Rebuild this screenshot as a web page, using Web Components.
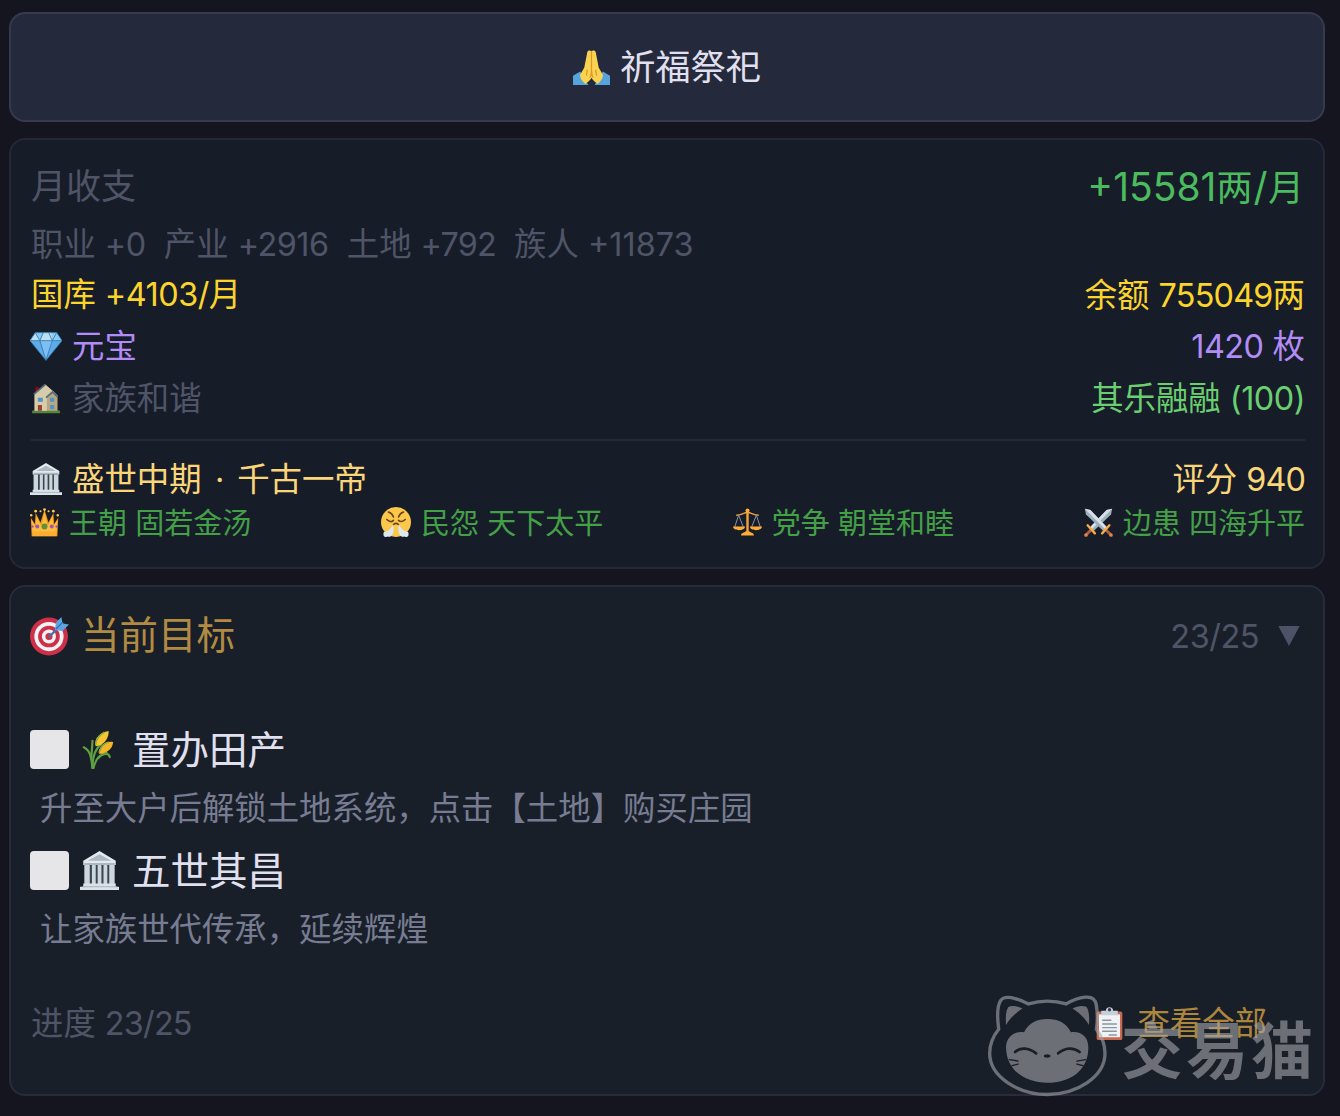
<!DOCTYPE html>
<html lang="zh-CN">
<head>
<meta charset="UTF-8">
<title>家族</title>
<style>
  html, body {
    height: 100%;
  }

  body {
    margin: 0;
    overflow: hidden;
    background: #14151e;
    color: #e0e0f0;
    font-family: "Noto Sans CJK SC", sans-serif;
    font-size: 32.4px;
    font-weight: 400;
    word-spacing: 1.8px;
  }
</style>
</head>
<body>
<family-page>
  <game-button><emoji-icon name="pray" size="37"></emoji-icon><span>祈福祭祀</span></game-button>

  <game-panel class="finance">
    <stat-row style="--h: 62px; --size: 35px; --color: #4f5467; --value: #4bbb5e; --value-size: 36px; --end: 1px; --lift: 8px; --value-lift: 2px">
      月收支
      <span slot="value"><num-run style="--num: 39px; --track: 0px">+15581</num-run>两<num-run style="--num: 39px; --gap: 1px">/</num-run>月</span>
    </stat-row>
    <stat-row style="--h: 52px; --color: #4f5467; --lift: 1px">
      职业 <num-run>+0</num-run>&nbsp; 产业 <num-run>+2916</num-run>&nbsp; 土地 <num-run style="--track: -0.8px">+792</num-run>&nbsp; 族人 <num-run style="--track: 0px">+11873</num-run>
    </stat-row>
    <stat-row style="--h: 50px; --color: #fbd42c">
      国库 <num-run>+4103/</num-run>月
      <span slot="value">余额 <num-run style="--track: -0.8px">755049</num-run>两</span>
    </stat-row>
    <stat-row style="--h: 52px; --color: #b28cf6">
      <emoji-icon slot="icon" name="gem" size="32"></emoji-icon>元宝
      <span slot="value"><num-run>1420</num-run> 枚</span>
    </stat-row>
    <stat-row style="--h: 52px; --color: #4f5467; --value: #69cf70">
      <emoji-icon slot="icon" name="house" size="32"></emoji-icon>家族和谐
      <span slot="value">其乐融融 <num-run>(100)</num-run></span>
    </stat-row>
    <panel-divider></panel-divider>
    <stat-row style="--h: 46px; --color: #fad679; --lift: 1px">
      <emoji-icon slot="icon" name="temple" size="32"></emoji-icon>盛世中期<num-run style="--gap: 3px"> · </num-run>千古一帝
      <span slot="value">评分 <num-run style="--track: -0.9px">940</num-run></span>
    </stat-row>
    <realm-status>
      <realm-item><emoji-icon name="crown" size="29"></emoji-icon><span>王朝 固若金汤</span></realm-item>
      <realm-item><emoji-icon name="huff" size="30"></emoji-icon><span>民怨 天下太平</span></realm-item>
      <realm-item><emoji-icon name="scales" size="29"></emoji-icon><span>党争 朝堂和睦</span></realm-item>
      <realm-item><emoji-icon name="swords" size="29"></emoji-icon><span>边患 四海升平</span></realm-item>
    </realm-status>
  </game-panel>

  <game-panel class="goals">
    <stat-row style="--h: 66px; --size: 38.5px; --color: #b18b43; --value: #4f5467; --value-size: 32.5px; --end: 4px; --icon-gap: 12px; --lift: 7px; --value-lift: 0px">
      <emoji-icon slot="icon" name="target" size="39"></emoji-icon>当前目标
      <span slot="value"><num-run>23/25</num-run><emoji-icon name="caret" size="24" style="margin-left: 18px; vertical-align: 0"></emoji-icon></span>
    </stat-row>
    <goal-list>
      <goal-item>
        <emoji-icon slot="icon" name="rice" size="39"></emoji-icon>
        置办田产
        <span slot="desc">升至大户后解锁土地系统，点击【土地】购买庄园</span>
      </goal-item>
      <goal-item>
        <emoji-icon slot="icon" name="temple" size="39"></emoji-icon>
        五世其昌
        <span slot="desc">让家族世代传承，延续辉煌</span>
      </goal-item>
    </goal-list>
    <stat-row style="--h: 60px; --color: #4f5467; --value: #ad863d; --end: 38px; --value-lift: 4px">
      进度 <num-run style="--track: -0.8px">23/25</num-run>
      <span slot="value"><emoji-icon name="clipboard" size="33" style="margin-right: 11px; vertical-align: -5px"></emoji-icon>查看全部</span>
    </stat-row>
  </game-panel>

  <cat-watermark slot="overlay">交易猫</cat-watermark>
</family-page>

<script>
const ICONS = {
  pray: `
    <path fill="#55a4dc" d="M0 26l7-4 8 13H0zM36 26l-7-4-8 13h15z"/>
    <path fill="#fcd350" d="M17.8 2c-1.3-1.2-3.6-.7-3.9 1.2L11 18l-4 7c-1 2 2.5 7 5 9 2.600-2 4.800-3.500 6-6 1.200 2.500 3.400 4 6 6 2.500-2 6-7 5-9l-4-7-2.900-14.800c-.3-1.900-2.600-2.400-4.300-1.200z"/>
    <path fill="none" stroke="#d89b2b" stroke-width="1.200" d="M18 2v17c0 4 0 6-1.500 9M18 19c0 4 0 6 1.500 9M14 20l-1 6M22 20l1 6"/>`,
  gem: `
    <path fill="#5dadec" d="M0 12L18 34 36 12 30 3H6z"/>
    <path fill="#8ccaf7" d="M0 12L6 3h24l6 9z"/>
    <path fill="#bddff4" d="M12 12L15 3h9l1 9zM0 12l6-9 5 9z"/>
    <path fill="#7dbff2" d="M12 12h13l-7 22z"/>
    <path fill="none" stroke="#3a7eb0" stroke-width="1" d="M0 12L6 3h24l6 9-18 22zM0 12h36M11 12l7 22 7-22M6 3l5 9 4-9M21 3l4 9 5-9"/>`,
  house: `
    <g transform="translate(1.500 2) scale(.92)" opacity=".9">
      <path fill="#5c913b" d="M1 33q17-5 34 0v3H1z"/>
      <path fill="#a0041e" d="M5 4h4v8H5z"/>
      <path fill="#c9b88d" d="M4 12L17 1l10 8 5 5v19H4z"/>
      <path fill="#ebdfb9" d="M17 1L4 12v21h15V17l8-7z"/>
      <path fill="none" stroke="#66757f" stroke-width="2.200" d="M18 17l8-7 6 6M3 13L17 1"/>
      <path fill="#55a1d5" d="M8 17h6v5H8zM23 17h5v5h-5zM23 26h5v5h-5z"/>
      <path fill="#a84232" d="M8 26h5v7H8z"/>
    </g>`,
  temple: `
    <path fill="#e3e9ed" d="M3 9L18 0l15 9v4H3z"/>
    <path fill="#aab8c2" d="M7 9l11-6 11 6zM4 11h28v2H4z"/>
    <path fill="#3c4650" d="M5 13h26v18H5z"/>
    <path fill="#ccd6dd" d="M4 13h5v18H4zM11 13h3.500v18H11zM16.300 13h3.500v18h-3.500zM21.700 13h3.500v18h-3.500zM27 13h5v18h-5z"/>
    <path fill="#dce3e8" d="M3 30h30v3H3zM0 33h36v3H0z"/>
    <path fill="#a5b2bb" d="M2 32.500h32v1H2z"/>`,
  crown: `
    <path fill="#f4900c" d="M2 35L1 12l5 8 1-14 6 12 5-16 5 16 6-12 1 14 5-8-1 23z"/>
    <path fill="#ffbd3f" d="M3 31L2 15l5 8 1-13 6 12 4-17 4 17 6-12 1 13 5-8-1 16z"/>
    <path fill="#ffac33" d="M3 29h30v6H3z"/>
    <g fill="#ffcc4d"><circle cx="1.500" cy="9" r="1.500"/><circle cx="7" cy="4" r="1.700"/><circle cx="13" cy="4" r="1.300"/><circle cx="18" cy="2" r="1.800"/><circle cx="23" cy="4" r="1.300"/><circle cx="29" cy="4" r="1.700"/><circle cx="34.500" cy="9" r="1.500"/></g>
    <circle cx="18" cy="23" r="3.700" fill="#5c913b"/>
    <g fill="#9b55b5"><circle cx="9" cy="23" r="2.500"/><circle cx="27" cy="23" r="2.500"/><circle cx="3" cy="23" r="1.500"/><circle cx="33" cy="23" r="1.500"/></g>`,
  huff: `
    <circle cx="18" cy="18" r="18" fill="#fbc84b"/>
    <path fill="none" stroke="#704516" stroke-width="2" stroke-linecap="round" d="M9 6c3 1 5 3 6 6M27 6c-3 1-5 3-6 6M7 15c3 3 6 3 8 1M29 15c-3 3-6 3-8 1M15 21c2-2 4-2 6 0"/>
    <path fill="#dce7f0" d="M14.500 21c1 5 1 10-1.500 13-1 2-4 2-5 1.500-2 1-5.500 0-5-2.500-.5-3 1-4 4-4 3-1 5.500-4 7.500-8zM21.500 21c-1 5-1 10 1.500 13 1 2 4 2 5 1.500 2 1 5.500 0 5-2.500.5-3-1-4-4-4-3-1-5.500-4-7.500-8z"/>`,
  scales: `
    <g fill="none" stroke="#f1a33c" stroke-width="1.800"><path d="M4 9c5 0 8-2 11-3h6c3 1 6 3 11 3"/><path stroke-width="3" d="M18 2v29"/></g>
    <path fill="none" stroke="#8899a6" stroke-width="1.200" d="M2 24L7 9l6 15M23 24l6-15 5 15"/>
    <path fill="#ffac33" d="M0 23h15c0 6-15 6-15 0zM21 23h15c0 6-15 6-15 0zM10 34c0-3 4-3 6-5h4c2 2 6 2 6 5z"/>
    <circle cx="18" cy="3" r="2.500" fill="#ffac33"/>`,
  swords: `
    <path fill="#9fb0bd" d="M35 1l-7 1.500L7.500 24l4.500 4.500L33.500 8z"/>
    <path fill="#d5e0e8" d="M35 1l-7 1.500L7.500 24l2.300 2.300z"/>
    <path fill="#9fb0bd" d="M1 1l7 1.500L28.500 24 24 28.500 2.500 8z"/>
    <path fill="#d5e0e8" d="M1 1l7 1.500L28.500 24l-2.300 2.300z"/>
    <path fill="none" stroke="#b55f3f" stroke-width="3.600" d="M27 27l6 6M9 27l-6 6"/>
    <path fill="none" stroke="#f5a947" stroke-width="3" stroke-linecap="round" d="M22.500 31.500l3.500-4 2-2 3.500-4M13.500 31.500l-3.500-4-2-2-3.500-4"/>
    <circle cx="33.500" cy="33.500" r="2.300" fill="#e1834e"/>
    <circle cx="2.500" cy="33.500" r="2.300" fill="#e1834e"/>`,
  target: `
    <circle cx="17.500" cy="18" r="17.500" fill="#cf3049"/>
    <circle cx="17.500" cy="18" r="13.500" fill="#f3f3f6"/>
    <circle cx="17.500" cy="18" r="10" fill="#cf3049"/>
    <circle cx="17.500" cy="18" r="6.500" fill="#f3f3f6"/>
    <circle cx="17.500" cy="18" r="3.300" fill="#cf3049"/>
    <path stroke="#3b77ac" stroke-width="2.200" stroke-linecap="round" d="M18 18L30 6"/>
    <path fill="#5aa5e2" d="M23 12l1-7 5-5 1 6 6 1-6 6z"/>
    <path stroke="#306a9f" stroke-width="1" d="M24 11l6-6"/>`,
  caret: `<path fill="#4c5268" d="M2 3h32L18 33z"/>`,
  rice: `
    <g transform="translate(1.500 0)">
      <g fill="none" stroke="#5fa043" stroke-width="2" stroke-linecap="round"><path d="M10 35c-1-10-2-16-8-19"/><path d="M10 35c0-12 3-18 8-22"/><path d="M11 35c2-9 7-13 12-14"/><path d="M9 27c0-7 1-13 1-17M15 26c5-5 10-5 11-1"/></g>
      <path fill="#f7c52f" d="M13 15c-2-7 4-13 12-14 0 6-3 13-12 14z"/>
      <path fill="#f4b52a" d="M16 22c0-8 6-12 13-11 0 5-5 11-13 11z"/>
      <path fill="none" stroke="#7fac3c" stroke-width="1.300" d="M13 14c0-5 3-9 8-12M16 21c1-4 3-8 9-10"/>
    </g>`,
  clipboard: `
    <rect x="4" y="5" width="28" height="31" rx="2" fill="#c96650"/>
    <path fill="#f0f2f5" d="M6.500 8h23v25h-23z"/>
    <path fill="#c5d0d9" d="M9 4h5c0-5 8-5 8 0h5v5H9z"/>
    <circle cx="18" cy="3" r="1.800" fill="#353a45"/>
    <path stroke="#8797a4" stroke-width="1.500" d="M10 14.500h10M10 18.500h16M10 22.500h16M10 26.500h16M17 30.500h9"/>`,
};

// attaches an open shadow root filled with the given markup
function render(el, html) {
  el.attachShadow({ mode: "open" }).innerHTML = html.trim();
}

class EmojiIcon extends HTMLElement {
  constructor() {
    super();
    const size = this.getAttribute("size") || 32;
    render(this, `
      <style>
        :host {
          display: inline-flex;
          flex: none;
          width: ${size}px;
          height: ${size}px;
        }
        svg {
          width: 100%;
          height: 100%;
        }
      </style>
      <svg viewBox="0 0 36 36" aria-hidden="true">${ICONS[this.getAttribute("name")] || ""}</svg>
    `);
  }
}

class NumRun extends HTMLElement {
  constructor() {
    super();
    // no whitespace around the slot, it would show up inline as a space
    render(this, `
      <style>
        :host {
          font-family: Inter, "Liberation Sans", sans-serif;
          font-size: var(--num, 1em);
          letter-spacing: var(--track, -0.5px);
          margin: 0 var(--gap, 0px);
          line-height: 1;
        }
      </style><slot></slot>
    `);
  }
}

class FamilyPage extends HTMLElement {
  constructor() {
    super();
    render(this, `
      <style>
        :host {
          display: flex;
          flex-direction: column;
          gap: 16px;
          box-sizing: border-box;
          height: 1116px;
          padding: 12px 15px 20px 9px;
          position: relative;
        }
      </style>
      <slot></slot>
      <slot name="overlay"></slot>
    `);
  }
}

class GameButton extends HTMLElement {
  constructor() {
    super();
    render(this, `
      <style>
        :host {
          display: flex;
          align-items: center;
          justify-content: center;
          gap: 10px;
          box-sizing: border-box;
          flex: 0 0 110px;
          border: 2px solid #363a4f;
          border-radius: 16px;
          background: #24293b;
          font-size: 35.3px;
          line-height: 1;
        }
        ::slotted(span) {
          margin-bottom: 4px;
        }
      </style>
      <slot></slot>
    `);
  }
}

class GamePanel extends HTMLElement {
  constructor() {
    super();
    render(this, `
      <style>
        :host {
          display: block;
          box-sizing: border-box;
          border: 2px solid #252937;
          border-radius: 16px;
          padding: 16px 18px 0 20px;
          background: #171c29;
        }
        :host(.finance) {
          flex: 0 0 431px;
        }
        :host(.goals) {
          flex: 0 0 511px;
          background: #191f28;
          border-color: #272b3c;
        }
      </style>
      <slot></slot>
    `);
  }
}

class StatRow extends HTMLElement {
  constructor() {
    super();
    render(this, `
      <style>
        :host {
          display: flex;
          align-items: center;
          justify-content: space-between;
          height: var(--h);
          padding-right: var(--end, 0px);
          color: var(--color);
          font-size: var(--size, 32.4px);
          line-height: 1;
          white-space: nowrap;
        }
        .label {
          display: flex;
          align-items: center;
        }
        ::slotted([slot="icon"]) {
          margin-right: var(--icon-gap, 10px);
          margin-left: -1px;
        }
        .text {
          margin-bottom: var(--lift, 3px);
        }
        .value {
          margin-bottom: var(--value-lift, 1px);
          color: var(--value, inherit);
          font-size: var(--value-size, inherit);
        }
      </style>
      <span class="label"><slot name="icon"></slot><span class="text"><slot></slot></span></span>
      <span class="value"><slot name="value"></slot></span>
    `);
  }
}

class PanelDivider extends HTMLElement {
  constructor() {
    super();
    render(this, `
      <style>
        :host {
          display: block;
          height: 2px;
          margin: 15px 0;
          background: #252a39;
        }
      </style>
    `);
  }
}

class RealmStatus extends HTMLElement {
  constructor() {
    super();
    render(this, `
      <style>
        :host {
          display: flex;
          justify-content: space-between;
          height: 40px;
          color: #43a047;
          font-size: 29px;
          line-height: 1;
        }
      </style>
      <slot></slot>
    `);
  }
}

class RealmItem extends HTMLElement {
  constructor() {
    super();
    render(this, `
      <style>
        :host {
          display: flex;
          align-items: center;
          gap: 10px;
          margin-left: -1px;
          white-space: nowrap;
        }
        ::slotted(span) {
          margin-bottom: 2px;
        }
      </style>
      <slot></slot>
    `);
  }
}

class GoalList extends HTMLElement {
  constructor() {
    super();
    render(this, `
      <style>
        :host {
          display: block;
          padding: 48px 0 35px;
        }
      </style>
      <slot></slot>
    `);
  }
}

class GoalItem extends HTMLElement {
  constructor() {
    super();
    render(this, `
      <style>
        :host {
          display: block;
          height: 121px;
        }
        .head {
          display: flex;
          align-items: center;
          height: 64px;
          font-size: 38.5px;
          line-height: 1;
        }
        .box {
          width: 39px;
          height: 39px;
          margin: 0 11px 0 -1px;
          border-radius: 4px;
          background: #e6e6e9;
        }
        .name {
          margin: 0 0 4px 13px;
        }
        .desc {
          height: 50px;
          padding-left: 9px;
          color: #777c93;
          line-height: 50px;
          white-space: nowrap;
        }
      </style>
      <div class="head">
        <span class="box"></span>
        <slot name="icon"></slot>
        <span class="name"><slot></slot></span>
      </div>
      <div class="desc"><slot name="desc"></slot></div>
    `);
  }
}

class CatWatermark extends HTMLElement {
  constructor() {
    super();
    render(this, `
      <style>
        :host {
          position: absolute;
          left: 988px;
          top: 995px;
          display: flex;
          gap: 14px;
          color: #a4a6aa;
          opacity: 0.6;
          font-size: 62px;
          font-weight: 700;
          letter-spacing: 3px;
          line-height: 104px;
          height: 102px;
          white-space: nowrap;
        }
        svg {
          width: 119px;
          height: 102px;
        }
      </style>
      <svg viewBox="84 76 356 304" aria-hidden="true">
        <path fill="none" stroke="currentColor" stroke-width="10" d="M116 178c-5-38-5-70 6-86 8-12 28-10 43-6s30 11 40 16c35-10 78-10 113 0 17-10 37-18 57-20s30 6 33 23c4 25 4 50 0 73 20 27 26 47 26 72 0 70-84 123-172 123S89 320 89 250c0-30 9-50 27-72z"/>
        <path fill="currentColor" d="M138 165c-2-25 0-50 10-55 12-4 27 0 39 6-22 14-37 29-49 49zM386 165c2-25 0-50-10-55-12-4-27 0-39 6 22 14 37 29 49 49z"/>
        <path fill="currentColor" d="M262 147c33 0 58 13 70 40 28-5 52 13 52 43 2 70-54 108-122 108S138 300 138 232c0-32 27-50 54-45 12-27 38-40 70-40z"/>
        <g fill="none" stroke="#191f28" stroke-width="8" stroke-linecap="round">
          <path d="M165 246c15-14 40-14 63 4M294 250c21-18 46-18 64-4"/>
          <path stroke-width="4" d="M148 269l26 4M156 287l18-5M376 269l-26 4M368 287l-18-5"/>
        </g>
        <ellipse cx="261" cy="258" rx="10" ry="5" fill="#191f28"/>
      </svg>
      <span><slot></slot></span>
    `);
  }
}

customElements.define("emoji-icon", EmojiIcon);
customElements.define("num-run", NumRun);
customElements.define("family-page", FamilyPage);
customElements.define("game-button", GameButton);
customElements.define("game-panel", GamePanel);
customElements.define("stat-row", StatRow);
customElements.define("panel-divider", PanelDivider);
customElements.define("realm-status", RealmStatus);
customElements.define("realm-item", RealmItem);
customElements.define("goal-list", GoalList);
customElements.define("goal-item", GoalItem);
customElements.define("cat-watermark", CatWatermark);
</script>
</body>
</html>
